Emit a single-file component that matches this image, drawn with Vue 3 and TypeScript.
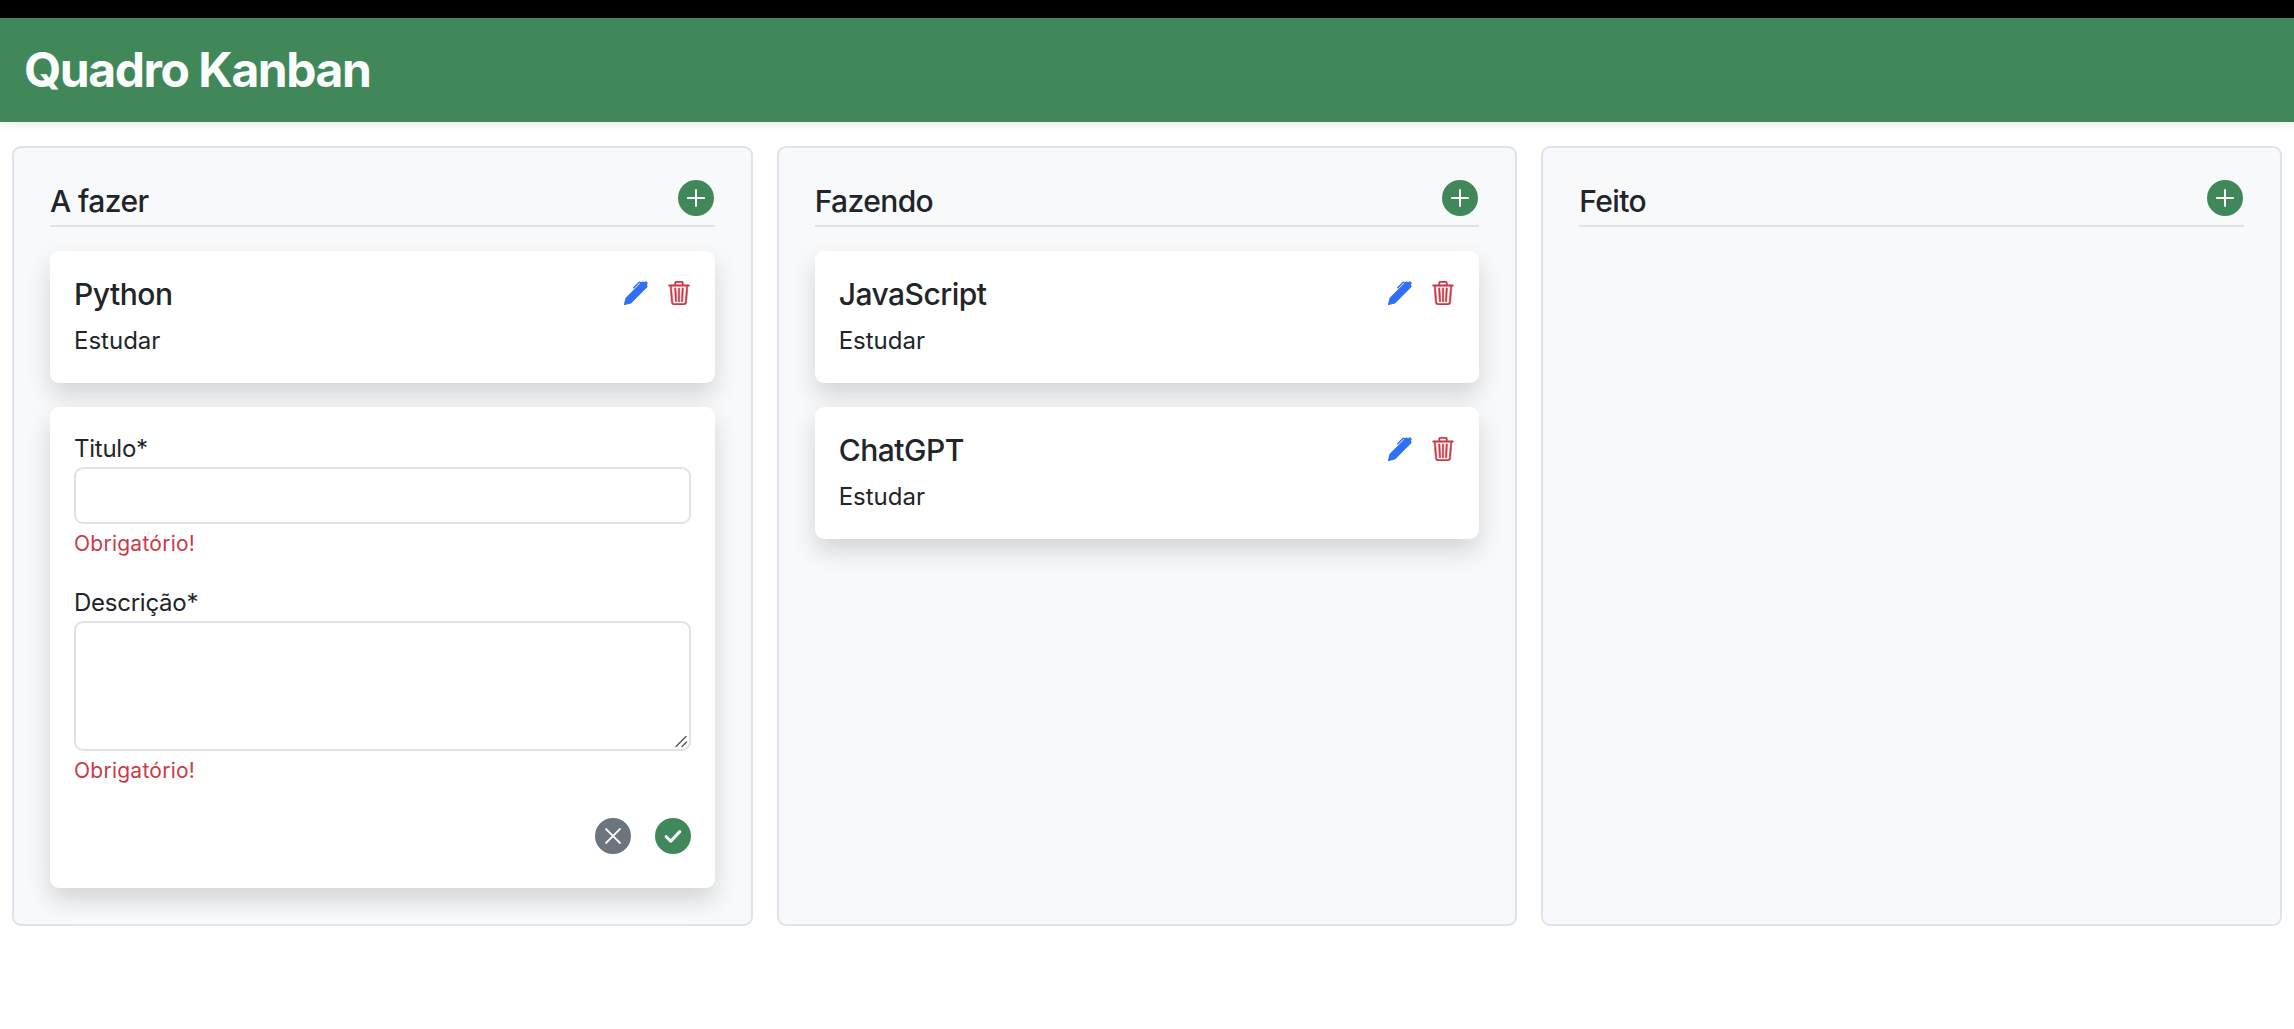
<script setup lang="ts">
interface Task {
  title: string
  description: string
}

interface Column {
  name: string
  tasks: Task[]
  showForm?: boolean
}

const columns: Column[] = [
  { name: 'A fazer', tasks: [{ title: 'Python', description: 'Estudar' }], showForm: true },
  {
    name: 'Fazendo',
    tasks: [
      { title: 'JavaScript', description: 'Estudar' },
      { title: 'ChatGPT', description: 'Estudar' }
    ]
  },
  { name: 'Feito', tasks: [] }
]
</script>

<template>
  <div class="top-strip"></div>
  <header class="navbar">
    <h1>Quadro Kanban</h1>
  </header>
  <main class="board">
    <section v-for="col in columns" :key="col.name" class="column">
      <div class="column-head">
        <h2>{{ col.name }}</h2>
        <button class="round green add" type="button" aria-label="Adicionar">
          <svg viewBox="0 0 16 16" width="24" height="24" fill="none" stroke="#fff" stroke-width="1.3" stroke-linecap="round">
            <path d="M8 2.6v10.8M2.6 8h10.8" />
          </svg>
        </button>
      </div>

      <article v-for="task in col.tasks" :key="task.title" class="card">
        <div class="card-head">
          <h3>{{ task.title }}</h3>
          <div class="card-actions">
            <svg class="pen" viewBox="0 0 16 16" width="24" height="24" fill="currentColor">
              <path d="m13.498.795.149-.149a1.207 1.207 0 1 1 1.707 1.708l-.149.148a1.5 1.5 0 0 1-.059 2.059L4.854 14.854a.5.5 0 0 1-.233.131l-4 1a.5.5 0 0 1-.606-.606l1-4a.5.5 0 0 1 .131-.232l9.642-9.642a.5.5 0 0 0-.642.056L6.854 4.854a.5.5 0 1 1-.708-.708L9.44.854A1.5 1.5 0 0 1 11.5.796a1.5 1.5 0 0 1 1.998-.001z" />
            </svg>
            <svg class="trash" viewBox="0 0 16 16" width="24" height="24" fill="currentColor" stroke="currentColor" stroke-width="0.35">
              <path d="M6.5 1h3a.5.5 0 0 1 .5.5v1H6v-1a.5.5 0 0 1 .5-.5ZM11 2.5v-1A1.5 1.5 0 0 0 9.5 0h-3A1.5 1.5 0 0 0 5 1.5v1H2.506a.58.58 0 0 0-.01 0H1.5a.5.5 0 0 0 0 1h.538l.853 10.66A2 2 0 0 0 4.885 16h6.23a2 2 0 0 0 1.994-1.84l.853-10.66h.538a.5.5 0 0 0 0-1h-.997a.58.58 0 0 0-.01 0H11Zm1.958 1-.846 10.58a1 1 0 0 1-.997.92h-6.23a1 1 0 0 1-.997-.92L3.042 3.5h9.916Zm-7.487 1a.5.5 0 0 1 .528.47l.5 8.5a.5.5 0 0 1-.998.06L5 5.03a.5.5 0 0 1 .47-.53Zm5.058 0a.5.5 0 0 1 .47.53l-.5 8.5a.5.5 0 1 1-.998-.06l.5-8.5a.5.5 0 0 1 .528-.47ZM8 4.5a.5.5 0 0 1 .5.5v8.5a.5.5 0 0 1-1 0V5a.5.5 0 0 1 .5-.5Z" />
            </svg>
          </div>
        </div>
        <p class="card-text">{{ task.description }}</p>
      </article>

      <form v-if="col.showForm" class="card task-form" @submit.prevent>
        <label class="field">
          <span class="field-label">Titulo*</span>
          <input class="control" type="text" />
          <small class="error">Obrigatório!</small>
        </label>
        <label class="field">
          <span class="field-label">Descrição*</span>
          <span class="area-wrap">
            <textarea class="control area"></textarea>
            <svg class="grip" viewBox="0 0 14 14" width="14" height="14" fill="none" stroke="#555" stroke-width="1.4" stroke-linecap="round">
              <path d="M2 12.5L12 2.5M8 12.5L12.5 8" />
            </svg>
          </span>
          <small class="error">Obrigatório!</small>
        </label>
        <div class="form-actions">
          <button class="round grey" type="button" aria-label="Cancelar">
            <svg viewBox="0 0 16 16" width="24" height="24" fill="none" stroke="#fff" stroke-width="1.3" stroke-linecap="round">
              <path d="M3.4 3.4l9.2 9.2M12.6 3.4l-9.2 9.2" />
            </svg>
          </button>
          <button class="round green" type="submit" aria-label="Salvar">
            <svg viewBox="0 0 16 16" width="24" height="24" fill="none" stroke="#fff" stroke-width="2" stroke-linecap="round" stroke-linejoin="round">
              <path d="M3.4 8.4l3.1 3.1 6-6.4" />
            </svg>
          </button>
        </div>
      </form>
    </section>
  </main>
</template>

<style>
html,
body {
  background: #fff;
}
</style>

<style scoped>
.top-strip {
  height: 18px;
  background: #000;
}

.navbar {
  position: relative;
  height: 104px;
  display: flex;
  align-items: center;
  padding: 0 24px;
  background: #40885a;
  box-shadow: 0 3px 8px rgba(0, 0, 0, 0.08);
  font-family: Inter, "Liberation Sans", sans-serif;
}

.navbar h1 {
  margin: 0;
  font-size: 48px;
  font-weight: 700;
  line-height: 1.2;
  letter-spacing: -1.45px;
  color: #fbfcfc;
}

.board {
  display: grid;
  grid-template-columns: repeat(3, 1fr);
  gap: 24px;
  padding: 24px 12px;
  font-family: Inter, "Liberation Sans", sans-serif;
  color: #212529;
}

.column {
  display: flex;
  flex-direction: column;
  gap: 24px;
  padding: 32px 36px 36px;
  background: #f8f9fa;
  border: 2px solid #dfe2e8;
  border-radius: 9px;
}

.column-head {
  display: flex;
  justify-content: space-between;
  align-items: flex-start;
  height: 45px;
  border-bottom: 2px solid #dfe2e8;
}

.column-head h2 {
  margin: 0;
  padding-top: 3px;
  font-size: 30px;
  font-weight: 500;
  line-height: 36px;
  letter-spacing: -0.6px;
}

.round {
  width: 36px;
  height: 36px;
  padding: 0;
  display: flex;
  align-items: center;
  justify-content: center;
  border: 0;
  border-radius: 50%;
}

.add {
  margin-right: 1px;
}

.green {
  background: #40885a;
}

.grey {
  background: #6c757d;
}

.card {
  padding: 24px;
  background: #fff;
  border-radius: 9px;
  box-shadow: 0 12px 24px rgba(0, 0, 0, 0.15);
}

.card-head {
  display: flex;
  justify-content: space-between;
  align-items: flex-start;
  margin-bottom: 11px;
}

.card-head h3 {
  margin: 0;
  padding-top: 1px;
  font-size: 30px;
  font-weight: 500;
  line-height: 36px;
  letter-spacing: -0.5px;
}

.card-actions {
  display: flex;
  gap: 19px;
  padding-top: 6px;
}

.pen {
  color: #3070f6;
}

.trash {
  color: #c93b46;
}

.card-text {
  margin: 0;
  font-size: 24px;
  line-height: 36px;
}

.field {
  display: block;
  margin-bottom: 25px;
}

.field-label {
  display: block;
  font-size: 24px;
  line-height: 36px;
  letter-spacing: -0.25px;
}

.control {
  display: block;
  box-sizing: border-box;
  width: 100%;
  height: 57px;
  padding: 9px 18px;
  background: #fff;
  border: 2px solid #dfe2e8;
  border-radius: 9px;
  font: inherit;
  outline: none;
}

.area-wrap {
  position: relative;
  display: block;
}

.area {
  height: 130px;
  resize: none;
}

.grip {
  position: absolute;
  right: 3px;
  bottom: 3px;
}

.error {
  display: block;
  margin-top: 4px;
  font-size: 21px;
  line-height: 31.5px;
  letter-spacing: 0.25px;
  color: #c93b46;
}

.form-actions {
  display: flex;
  justify-content: flex-end;
  gap: 24px;
  padding-top: 7px;
  padding-bottom: 10px;
}
</style>
